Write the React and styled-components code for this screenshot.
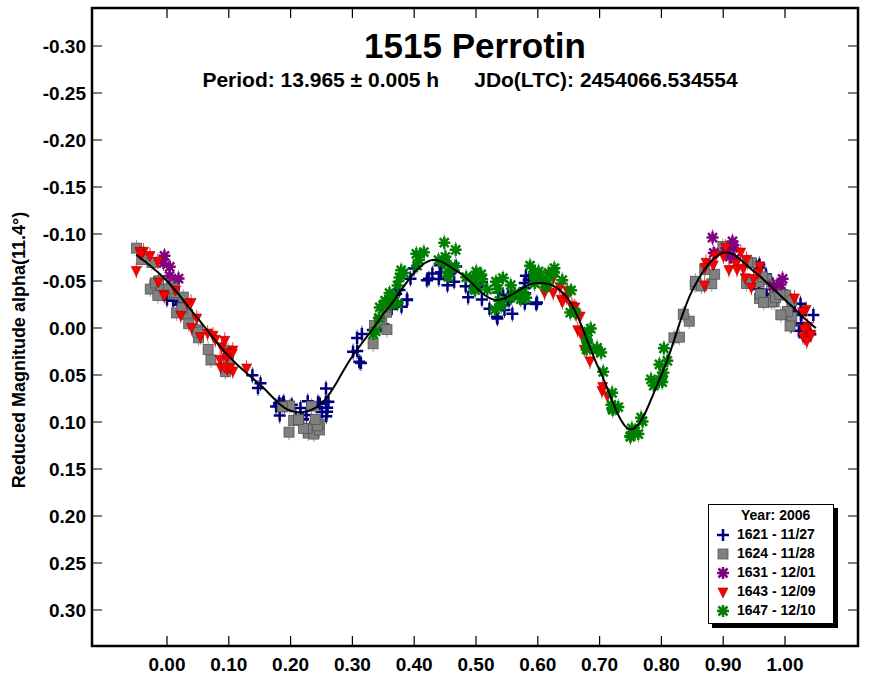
import React from "react";
import styled, { createGlobalStyle } from "styled-components";

const Global = createGlobalStyle`
  body { margin: 0; background: #fff; font-family: "Liberation Sans", Arial, sans-serif; }
`;

const L = 92, T = 8, R = 858, B = 646;
const px = (p) => 167 + p * 618;
const py = (m) => 328 + m * 940;

const knots = [
  [-0.1, -0.1], [-0.05, -0.078], [0.0, -0.05], [0.05, -0.01], [0.1, 0.03], [0.15, 0.06], [0.2, 0.088],
  [0.25, 0.08], [0.3, 0.03], [0.35, -0.015], [0.42, -0.07], [0.47, -0.06],
  [0.53, -0.03], [0.6, -0.048], [0.65, -0.03], [0.7, 0.045], [0.75, 0.108],
  [0.8, 0.05], [0.85, -0.04], [0.9, -0.08], [0.95, -0.06], [1.0, -0.03], [1.05, 0.0], [1.1, 0.02],
];
function curve(p) {
  let i = 0;
  while (i < knots.length - 2 && knots[i + 1][0] < p) i++;
  const p0 = knots[Math.max(i - 1, 0)], p1 = knots[i], p2 = knots[i + 1], p3 = knots[Math.min(i + 2, knots.length - 1)];
  const t = (p - p1[0]) / (p2[0] - p1[0]);
  const t2 = t * t, t3 = t2 * t;
  return 0.5 * (2 * p1[1] + (-p0[1] + p2[1]) * t + (2 * p0[1] - 5 * p1[1] + 4 * p2[1] - p3[1]) * t2 + (-p0[1] + 3 * p1[1] - 3 * p2[1] + p3[1]) * t3);
}

let seed = 7;
const rnd = () => { seed = (seed * 16807) % 2147483647; return seed / 2147483647; };
const make = (ranges, n, noise, off = 0) => {
  const pts = [];
  ranges.forEach(([a, b]) => {
    const k = Math.round((b - a) * n);
    for (let j = 0; j < k; j++) {
      const p = a + rnd() * (b - a);
      pts.push([p, curve(p) + off + (rnd() - 0.5) * noise]);
    }
  });
  return pts;
};

const sets = [
  { key: "blue", color: "#00007f", shape: "plus", pts: make([[0, 0.03], [0.13, 0.27], [0.3, 0.4], [0.42, 0.6], [0.95, 1.05]], 200, 0.035, 0.005) },
  { key: "gray", color: "#808080", shape: "square", pts: make([[-0.05, 0.1], [0.17, 0.25], [0.32, 0.36], [0.82, 1.02]], 170, 0.035, 0.01) },
  { key: "purple", color: "#800080", shape: "star", pts: make([[-0.01, 0.02], [0.88, 0.93], [0.98, 1.0]], 150, 0.03, -0.01) },
  { key: "red", color: "#ff0000", shape: "tri", pts: make([[-0.05, 0.13], [0.6, 0.72], [0.86, 0.96], [1.0, 1.05]], 180, 0.035, 0.005) },
  { key: "green", color: "#008000", shape: "star", pts: make([[0.33, 0.6], [0.6, 0.82]], 200, 0.035, -0.005) },
];

function Marker({ shape, color, x, y, s = 6 }) {
  if (shape === "plus")
    return <path d={`M${x - s} ${y}H${x + s}M${x} ${y - s}V${y + s}`} stroke={color} strokeWidth="2.5" />;
  if (shape === "square")
    return <rect x={x - 5} y={y - 5} width="10" height="10" fill={color} stroke="#555" strokeWidth="0.8" />;
  if (shape === "tri")
    return <path d={`M${x - 5} ${y - 4}H${x + 5}L${x} ${y + 6}Z`} fill={color} stroke="#900" strokeWidth="0.6" />;
  return (
    <path
      d={`M${x - s} ${y}H${x + s}M${x} ${y - s}V${y + s}M${x - 4.5} ${y - 4.5}L${x + 4.5} ${y + 4.5}M${x + 4.5} ${y - 4.5}L${x - 4.5} ${y + 4.5}`}
      stroke={color}
      strokeWidth="2.5"
    />
  );
}

const Page = styled.div`
  position: relative;
  width: 869px;
  height: 678px;
  overflow: hidden;
`;

const Chart = styled.svg`
  display: block;
`;

const Header = styled.div`
  position: absolute;
  left: 92px;
  top: 27px;
  width: 766px;
  display: flex;
  flex-direction: column;
  align-items: center;
  gap: 2px;
  font-weight: bold;
  color: #000;
`;

const Title = styled.div`
  font-size: ${(p) => p.$size}px;
  line-height: 1.1;
  white-space: pre;
  margin-left: ${(p) => p.$shift || 0}px;
`;

const Legend = styled.div`
  position: absolute;
  left: 708px;
  top: 504px;
  width: 118px;
  border: 1px solid #000;
  background: #fff;
  box-shadow: 4px 4px 0 #000;
  padding: 1px 0 3px 6px;
  font-weight: bold;
  font-size: 14px;
  line-height: 19px;
`;

const LegendHead = styled.div`
  padding-left: 26px;
`;

const LegendRow = styled.div`
  display: flex;
  align-items: center;
  gap: 6px;
`;

const yTicks = [-0.3, -0.25, -0.2, -0.15, -0.1, -0.05, 0, 0.05, 0.1, 0.15, 0.2, 0.25, 0.3];
const xTicks = [0, 0.1, 0.2, 0.3, 0.4, 0.5, 0.6, 0.7, 0.8, 0.9, 1.0];

export default function App() {
  const line = [];
  for (let p = -0.05; p <= 1.052; p += 0.005) line.push(`${px(p).toFixed(1)},${py(curve(p)).toFixed(1)}`);
  return (
    <Page>
      <Global />
      <Chart width="869" height="678" fontFamily="Liberation Sans, Arial, sans-serif" fontWeight="bold">
        <rect x={L} y={T} width={R - L} height={B - T} fill="none" stroke="#000" strokeWidth="2.5" />
        {yTicks.map((v) => (
          <g key={v}>
            <path d={`M${L} ${py(v)}h10M${R} ${py(v)}h-10`} stroke="#000" strokeWidth="1.2" />
            <text x="86" y={py(v) + 7} textAnchor="end" fontSize="19">{v.toFixed(2)}</text>
          </g>
        ))}
        {xTicks.map((v) => (
          <g key={v}>
            <path d={`M${px(v)} ${B}v-10M${px(v)} ${T}v10`} stroke="#000" strokeWidth="1.2" />
            <text x={px(v)} y="671" textAnchor="middle" fontSize="19">{v.toFixed(2)}</text>
          </g>
        ))}
        <text transform="translate(25 350) rotate(-90)" textAnchor="middle" fontSize="18">Reduced Magnitude alpha(11.4°)</text>
        {sets.map((s) =>
          s.pts.map(([p, m], i) => (
            <path key={s.key + "e" + i} d={`M${px(p)} ${py(m) - 8}V${py(m) + 8}`} stroke={s.color} strokeWidth="1" opacity="0.8" />
          ))
        )}
        {sets.map((s) => s.pts.map(([p, m], i) => <Marker key={s.key + i} shape={s.shape} color={s.color} x={px(p)} y={py(m)} />))}
        <polyline points={line.join(" ")} fill="none" stroke="#000" strokeWidth="2" />
      </Chart>
      <Header>
        <Title $size={35}>1515 Perrotin</Title>
        <Title $size={21} $shift={-10}>{"Period: 13.965 ± 0.005 h      JDo(LTC): 2454066.534554"}</Title>
      </Header>
      <Legend>
        <LegendHead>Year: 2006</LegendHead>
        {[["1621 - 11/27", sets[0]], ["1624 - 11/28", sets[1]], ["1631 - 12/01", sets[2]], ["1643 - 12/09", sets[3]], ["1647 - 12/10", sets[4]]].map(([t, s]) => (
          <LegendRow key={t}>
            <svg width="16" height="16"><Marker shape={s.shape} color={s.color} x={8} y={8} /></svg>
            {t}
          </LegendRow>
        ))}
      </Legend>
    </Page>
  );
}
